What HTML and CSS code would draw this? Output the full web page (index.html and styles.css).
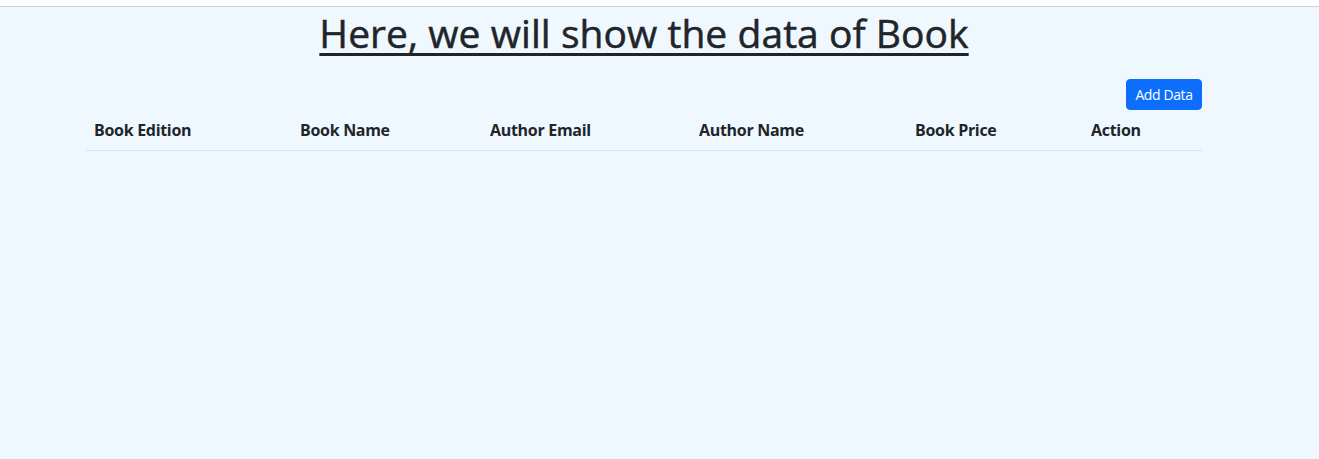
FILE: index.html
```html
<!DOCTYPE html>
<html lang="en">
<head>
<meta charset="utf-8">
<title>Book Data</title>
<link rel="stylesheet" href="styles.css">
</head>
<body>
<div class="topbar"></div>
<div class="page">
  <div class="container">
    <h1 class="title">Here, we will show the data of Book</h1>
    <div class="actions">
      <button class="btn-add" type="button">Add Data</button>
    </div>
    <table class="book-table">
      <colgroup>
        <col class="c1"><col class="c2"><col class="c3"><col class="c4"><col class="c5"><col class="c6">
      </colgroup>
      <thead>
        <tr>
          <th>Book Edition</th>
          <th>Book Name</th>
          <th>Author Email</th>
          <th>Author Name</th>
          <th>Book Price</th>
          <th>Action</th>
        </tr>
      </thead>
      <tbody></tbody>
    </table>
  </div>
</div>
</body>
</html>
```

FILE: styles.css
```css
* { box-sizing: border-box; }
html, body { margin: 0; padding: 0; }
body {
  background: #f0f8ff;
  color: #212529;
  font-family: "Open Sans", "Noto Sans", sans-serif;
  font-size: 16px;
  line-height: 1.5;
  min-height: 459px;
}
.topbar {
  height: 7px;
  background: #ffffff;
  border-bottom: 1px solid #cfcfcf;
}
.page {
  width: 1288px;
}
.container {
  max-width: 1140px;
  margin: 0 auto;
  padding: 0 12px;
}
.title {
  margin: 0 0 8px;
  padding-top: 3px;
  font-size: 39px;
  font-weight: 500;
  -webkit-text-stroke: 0.5px #212529;
  letter-spacing: 0.05px;
  line-height: 1.2;
  text-align: center;
  text-decoration: underline;
  text-underline-offset: 5px;
  text-decoration-thickness: 3px;
}
.actions {
  display: flex;
  justify-content: flex-end;
  margin-top: 22px;
}
.btn-add {
  background: #0d6efd;
  color: #fff;
  border: 1px solid #0d6efd;
  border-radius: 4px;
  font-family: inherit;
  font-size: 14px;
  letter-spacing: -0.4px;
  line-height: 1.5;
  padding: 4px 0;
  height: 31px;
  width: 76px;
  white-space: nowrap;
  text-align: center;
  cursor: pointer;
}
.book-table {
  width: 100%;
  border-collapse: collapse;
  table-layout: fixed;
}
.book-table th {
  text-align: left;
  font-weight: 700;
  letter-spacing: -0.3px;
  padding: 8px;
  border-bottom: 1px solid #dee2e6;
  white-space: nowrap;
}
.c1 { width: 206px; }
.c2 { width: 190px; }
.c3 { width: 209px; }
.c4 { width: 216px; }
.c5 { width: 176px; }
.c6 { width: 119px; }
```
